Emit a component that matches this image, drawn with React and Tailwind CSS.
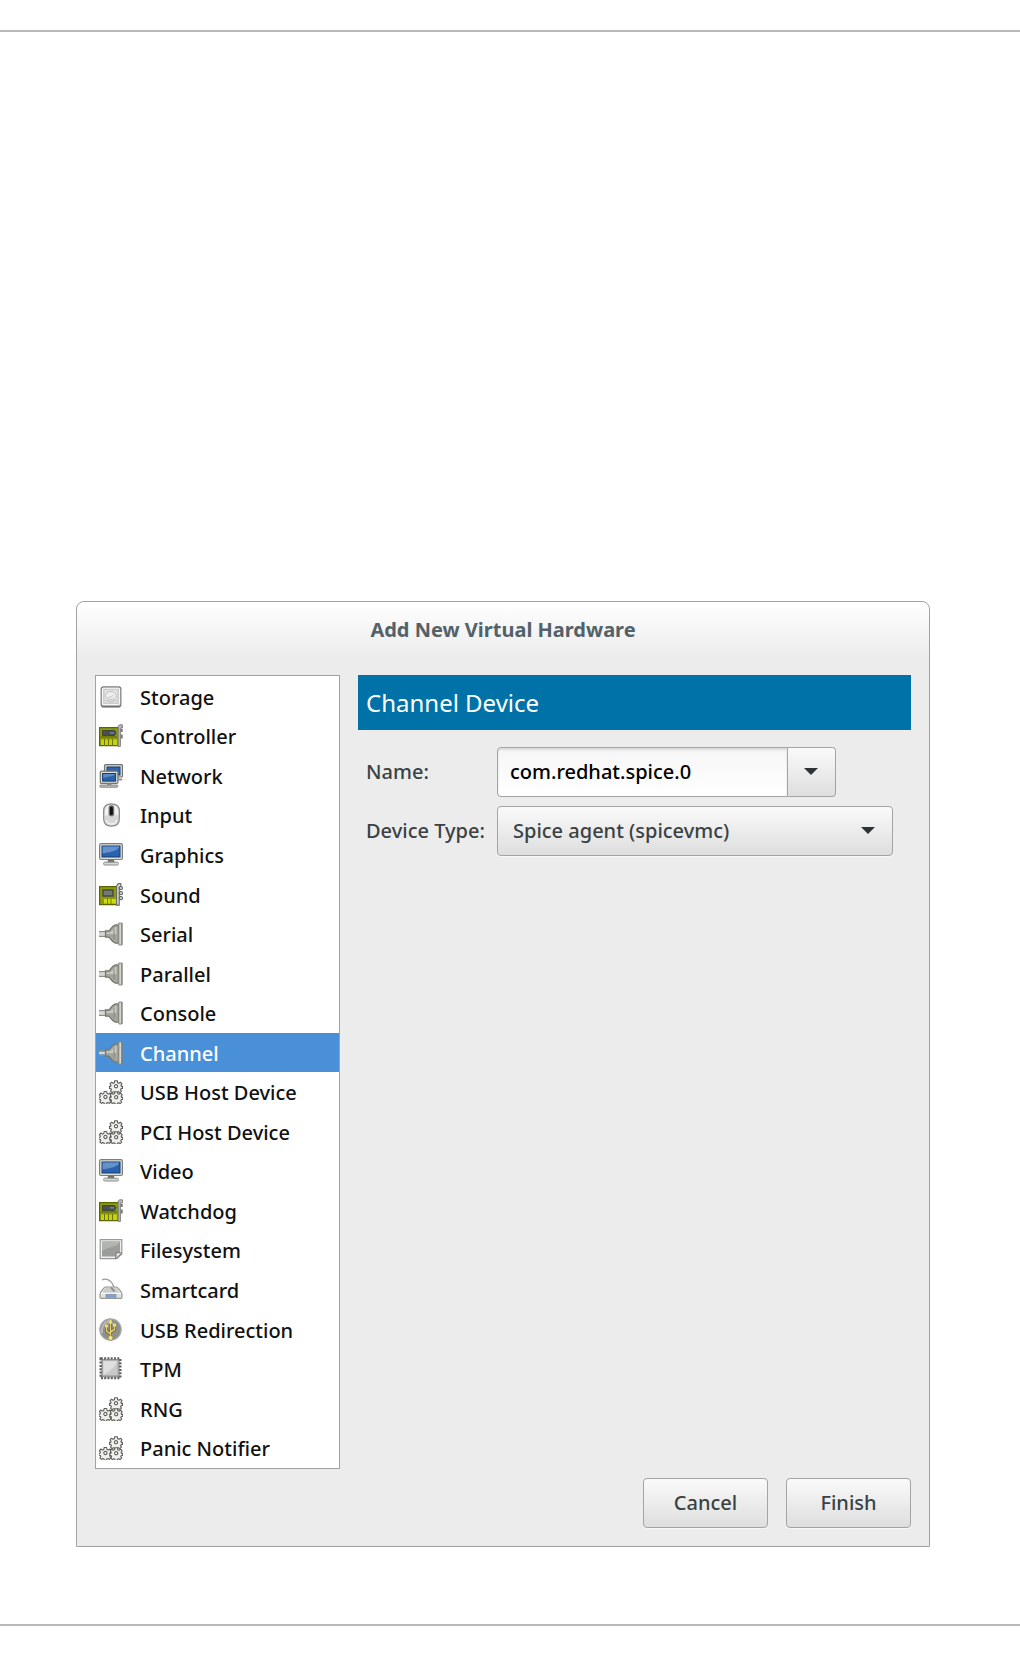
import React, { useState } from "react";

function Icon({ children }) {
  return (
    <svg viewBox="0 0 24 24" className="size-6 shrink-0" fill="none" aria-hidden="true">
      {children}
    </svg>
  );
}

function StorageIcon() {
  return (
    <Icon>
      <rect x="2.2" y="2" width="19.6" height="19.8" rx="2" fill="#d6d6d4" stroke="#7d7f7b" strokeWidth="1.3" />
      <path d="M3 21.4h18" stroke="#6e706c" strokeWidth="1.6" />
      <rect x="3.4" y="3.2" width="17.2" height="16.4" rx="1" stroke="#fafafa" />
      <rect x="5" y="4.6" width="14" height="13.5" rx="1" fill="#e4e4e3" stroke="#c3c3c1" strokeWidth=".8" />
      <ellipse cx="12" cy="10.500" rx="5.500" ry="4" fill="#efefee" stroke="#c0c0be" />
      <path d="M6 14.500c2 2.500 9 2.500 12 0" stroke="#bcbcba" />
      <path d="M9 12.500c2-.5 5-1 6-3" stroke="#c4c4c2" />
    </Icon>
  );
}

function CardIcon() {
  return (
    <Icon>
      <path d="M.6 3.600h18.800v18H.6z" fill="#8e9a0c" stroke="#5b6508" strokeWidth="1.200" />
      <path d="M2 15.500h16V21H2z" fill="#c5d408" />
      <path d="M5.500 15v7M9.500 15v7M13.500 15v7" stroke="#6b760a" strokeWidth="1" />
      <path d="M3.500 6.500h12l1.500 2-1.500 3h-12z" fill="#4b504c" stroke="#363b38" strokeWidth=".8" />
      <path d="M11 8h4v1.600h-4z" fill="#5a87b2" />
      <path d="M1.800 13h16" stroke="#59630b" />
      <path d="M23.400.800h-3l-1.200 1.400v20.200h2.200V4h2z" fill="#b9bab7" stroke="#838581" strokeWidth="1" />
      <path d="M22.800 5v3M22.800 10.500v4" stroke="#777975" strokeWidth="1.800" />
    </Icon>
  );
}

function NetworkIcon() {
  return (
    <Icon>
      <rect x="5.500" y=".6" width="18" height="12.400" rx="1.200" fill="#d9dad5" stroke="#72746f" strokeWidth="1.200" />
      <rect x="8" y="3" width="13" height="8" fill="#3066ae" stroke="#183e73" />
      <path d="M18 15.500h5.300" stroke="#8a8c88" strokeWidth="1.800" />
      <rect x="1.300" y="7.200" width="17.600" height="12.200" rx="1.200" fill="#dedfda" stroke="#72746f" strokeWidth="1.200" />
      <rect x="3.600" y="9.500" width="13" height="7.600" fill="#2c61ab" stroke="#163b70" />
      <path d="M4.200 14V10h12C14 13 8 12.500 4.200 14z" fill="#5b8cc9" />
      <path d="M8 19.500h4.500v1.500H8z" fill="#8d8f8b" />
      <rect x=".8" y="21" width="18" height="2.300" rx=".8" fill="#b9bab6" stroke="#7d7f7b" strokeWidth=".8" />
    </Icon>
  );
}

function MouseIcon() {
  return (
    <Icon>
      <path d="M4.600 8C4.600 3.200 7.500.800 12.300.800S20.400 3.200 20.400 8v7c0 5-3 8.200-8 8.200s-7.800-3.200-7.800-8.200z" fill="#d6d7d4" stroke="#8c8e8a" strokeWidth="1.200" />
      <path d="M6 8c0-3 2-5.500 4-5.800V11L6 13z" fill="#f3f3f2" />
      <path d="M15 2.500c3 .7 4 3 4 6v4l-4-1.500z" fill="#f0f0ef" />
      <path d="M7 17c1 3 3 4 5.500 4s4.500-1.500 5.500-4" stroke="#f2f2f1" strokeWidth="1.400" />
      <rect x="9.600" y="2.200" width="5.600" height="11" rx="2.800" fill="#6d6f6c" />
      <rect x="10.900" y="3.500" width="3" height="8.500" rx="1.500" fill="#111312" />
    </Icon>
  );
}

function MonitorIcon() {
  return (
    <Icon>
      <rect x=".6" y=".7" width="22.800" height="15.800" rx="1.500" fill="#dddeda" stroke="#7c7e79" strokeWidth="1.200" />
      <rect x="3" y="3" width="18" height="11" fill="#2b62ae" stroke="#173d74" />
      <path d="M3.600 10.500v-7h16.800c-2 5-10 5.500-16.800 7z" fill="#6493cc" />
      <path d="M9 16.800h6l.6 2.700H8.400z" fill="#6f716d" />
      <rect x="4.600" y="19.200" width="14.800" height="2.800" rx="1.200" fill="#d8d9d6" stroke="#8b8d89" strokeWidth="1" />
    </Icon>
  );
}

function SoundIcon() {
  return (
    <Icon>
      <path d="M.6 3.600h19v18H.6z" fill="#8e9a0c" stroke="#5b6508" strokeWidth="1.200" />
      <path d="M5 16h12v4.500H5z" fill="#cedb0a" />
      <path d="M8.500 15.500v5.500M12 15.500v5.500" stroke="#77820b" />
      <path d="M4 7h10v6H4z" fill="#737974" stroke="#444a43" strokeWidth="1.400" />
      <path d="M21.800.700h-2.500L17.600 3v19.200h2.600V4h1.600z" fill="#dfe0dd" stroke="#6c6e6a" strokeWidth="1.200" />
      <rect x="20.400" y="3.600" width="3" height="3" rx=".7" fill="#d0d1ce" stroke="#50524e" />
      <rect x="20.400" y="8.600" width="3" height="3" rx=".7" fill="#d0d1ce" stroke="#50524e" />
      <rect x="20.400" y="13.600" width="3" height="3" rx=".7" fill="#d0d1ce" stroke="#50524e" />
    </Icon>
  );
}

function PlugIcon() {
  return (
    <Icon>
      <path d="M0 9.800h9M0 14.200h9" stroke="#8d8f87" strokeWidth="1.500" />
      <path d="M0 12h9" stroke="#d8d9d4" strokeWidth="2.400" />
      <path d="M6.500 8.800h3c2 0 2.500-4.800 7-6h3v18.400h-3c-4.500-1.200-5-6-7-6h-3z" fill="#a4a69e" stroke="#74766e" strokeWidth="1.200" />
      <path d="M7.500 10.500h3c2.500 0 3-4.500 7-5.500v7h-10z" fill="#c9cac4" />
      <path d="M15 6.500v11" stroke="#85877f" />
      <path d="M19.800 1h3v22h-3z" fill="#d5d6d0" stroke="#8b8d85" strokeWidth="1" />
      <path d="M23 1v22" stroke="#777971" strokeWidth="1" />
    </Icon>
  );
}

const GEAR =
  "M-1.300-5.500h2.600l.3 2 1.300.6 1.600-1.100 1.500 1.600-1 1.500.3 1.100h1.200v2l-1.500.3-.4 1 .9 1.500-1.600 1.400-1.300-.9-1.300.5v1.200h-2.600v-1.200l-1.300-.5-1.300.9-1.600-1.400.9-1.500-.4-1-1.500-.3v-2h1.200l.3-1.100-1-1.500 1.500-1.600 1.600 1.100 1.300-.6z";

function Gear({ x, y }) {
  return (
    <g transform={`translate(${x} ${y})`}>
      <path d={GEAR} fill="#f0f0ee" stroke="#5c5e59" strokeWidth="1.100" strokeLinejoin="round" />
      <circle r="1.600" fill="#fff" stroke="#5c5e59" strokeWidth="1.100" />
    </g>
  );
}

function GearsIcon() {
  return (
    <Icon>
      <Gear x={17} y={6.200} />
      <Gear x={6.400} y={17} />
      <Gear x={17.200} y={17.200} />
    </Icon>
  );
}

function FilesystemIcon() {
  return (
    <Icon>
      <path d="M1.200 1.600h21.600V16l-5 4.600H1.200z" fill="#eeeeec" stroke="#999b97" strokeWidth="1.200" />
      <path d="M3 3.500h18v11l-4 4H3z" fill="#9b9d99" />
      <path d="M3 13V3.500h18C18 10 10 8 3 13z" fill="#b2b4b0" />
      <path d="M16.500 20.800l.8-6.300 5.700.5z" fill="#e7e7e5" stroke="#777975" strokeWidth="1" />
    </Icon>
  );
}

function SmartcardIcon() {
  return (
    <Icon>
      <path d="M3 2C7 0 11 2 13 5l2 4" stroke="#9a9c99" strokeWidth="1.300" />
      <path d="M6.500 9h11c1 0 5.500 5.500 5.500 7v3c0 .8-.5 1.300-1.300 1.300H2.300c-.8 0-1.300-.5-1.300-1.300v-3c0-1.500 4.500-7 5.500-7z" fill="#e0e1df" stroke="#969894" strokeWidth="1.200" />
      <path d="M7 10h10l4 5H3z" fill="#cbccc9" />
      <path d="M12 9.500l3.500 4" stroke="#858784" strokeWidth="1.600" />
      <path d="M2 15.300h20" stroke="#fafafa" strokeWidth="1.200" />
      <rect x="7" y="16.500" width="10" height="2.700" fill="#7fa5d5" stroke="#6d7f99" strokeWidth=".6" />
    </Icon>
  );
}

function UsbIcon() {
  return (
    <Icon>
      <circle cx="11.500" cy="11.500" r="10.700" fill="#8e908c" stroke="#a9aaa8" strokeWidth="1.200" />
      <path d="M3 15C2 7 7 2.500 13 2.500" stroke="#b9bab8" strokeWidth="2" />
      <path d="M11.500 20V4M11.500 16L7.500 13V8M11.500 14l4-2.500V7" stroke="#5e5a3c" strokeWidth="3" />
      <path d="M11.500 20V4M11.500 16L7.500 13V8M11.500 14l4-2.500V7" stroke="#e6d264" strokeWidth="1.500" />
      <path d="M11.500 1.500L9 5.500h5z" fill="#f1df72" />
      <circle cx="7.500" cy="8" r="1.700" fill="#f0dc66" />
      <path d="M14 5.600h3v3h-3z" fill="#f0dc66" />
      <circle cx="11.500" cy="20" r="2.400" fill="#f3e58c" stroke="#847a35" strokeWidth=".6" />
    </Icon>
  );
}

function ChipIcon() {
  return (
    <Icon>
      <rect x="1.800" y="1.600" width="19.400" height="19.400" stroke="#5f615e" strokeWidth="2.600" strokeDasharray="2 1.300" />
      <rect x="3" y="2.800" width="17" height="17" fill="#c9cac8" stroke="#777976" strokeWidth="1" />
      <path d="M4.500 18V4.300h14C16 10 11 14 4.500 18z" fill="#dfe0de" />
      <path d="M4 18.800h15V4" stroke="#a0a29f" />
    </Icon>
  );
}

const HARDWARE = [
  ["Storage", StorageIcon],
  ["Controller", CardIcon],
  ["Network", NetworkIcon],
  ["Input", MouseIcon],
  ["Graphics", MonitorIcon],
  ["Sound", SoundIcon],
  ["Serial", PlugIcon],
  ["Parallel", PlugIcon],
  ["Console", PlugIcon],
  ["Channel", PlugIcon],
  ["USB Host Device", GearsIcon],
  ["PCI Host Device", GearsIcon],
  ["Video", MonitorIcon],
  ["Watchdog", CardIcon],
  ["Filesystem", FilesystemIcon],
  ["Smartcard", SmartcardIcon],
  ["USB Redirection", UsbIcon],
  ["TPM", ChipIcon],
  ["RNG", GearsIcon],
  ["Panic Notifier", GearsIcon],
];

function Arrow() {
  return (
    <svg viewBox="0 0 14 7" className="h-[7px] w-3.5" aria-hidden="true">
      <path d="M0 0h14L7 7z" fill="#2e3436" />
    </svg>
  );
}

function DialogButton({ children }) {
  return (
    <button
      type="button"
      className="h-[50px] w-[125px] rounded border border-[#a4a4a4] bg-linear-to-b from-[#fafafa] to-[#dedede] font-medium text-[#3a4244] shadow-[0_1px_0_#f6f6f6]"
    >
      {children}
    </button>
  );
}

export default function App() {
  const [selected, setSelected] = useState("Channel");

  return (
    <main className="min-h-screen bg-white pt-[30px] pb-[30px] font-['Noto_Sans','Open_Sans',sans-serif] text-[20px] leading-7">
      <hr className="border-t-2 border-[#b9b9b9]" />
      <section
        role="dialog"
        aria-labelledby="dialog-title"
        className="mt-[569px] mr-[90px] mb-[77px] ml-[76px] rounded-t-lg border border-[#a1a1a1] bg-[#ececec]"
      >
        <header className="rounded-t-lg bg-linear-to-b from-white to-[#ececec] pt-[14px] pb-[13px]">
          <h1 id="dialog-title" className="text-center text-[20px] leading-7 font-bold text-[#536268]">
            Add New Virtual Hardware
          </h1>
        </header>

        <div className="flex gap-[18px] px-[18px] pt-[18px]">
          <ul className="grid min-h-[794px] w-[245px] shrink-0 auto-rows-fr border border-[#a1a1a1] bg-white pt-px">
            {HARDWARE.map(([label, Glyph]) => (
              <li key={label} className="flex">
                <button
                  type="button"
                  aria-pressed={selected === label}
                  onClick={() => setSelected(label)}
                  className={
                    selected === label
                      ? "flex w-full items-center gap-[17px] bg-[#4a90d9] pl-[3px] text-left font-medium text-white"
                      : "flex w-full items-center gap-[17px] pl-[3px] text-left font-medium text-[#111111]"
                  }
                >
                  <Glyph />
                  <span className="pt-0.5">{label}</span>
                </button>
              </li>
            ))}
          </ul>

          <div className="min-w-0 flex-1">
            <h2 className="bg-[#0072a8] px-2 pt-[13px] pb-3 text-[24px] leading-[30px] text-white">Channel Device</h2>
            <form className="mt-[17px] grid grid-cols-[131px_1fr] items-center gap-y-[9px] pr-[18px] pl-2 text-[#3a4244]">
              <label htmlFor="name" className="font-medium">Name:</label>
              <div className="flex h-[50px] max-w-[339px]">
                <input
                  id="name"
                  type="text"
                  defaultValue="com.redhat.spice.0"
                  className="min-w-0 flex-1 rounded-l border border-[#a4a4a4] bg-linear-to-b from-[#f6f6f6] to-white pl-3 font-medium text-black shadow-[inset_0_2px_2px_#dadada]"
                />
                <button
                  type="button"
                  aria-label="Show names"
                  className="flex w-12 items-center justify-center rounded-r border border-l-0 border-[#a4a4a4] bg-linear-to-b from-[#fafafa] to-[#dedede] pr-0.5 pb-0.5"
                >
                  <Arrow />
                </button>
              </div>
              <label htmlFor="device-type" className="font-medium">Device Type:</label>
              <div className="grid grid-cols-1 items-center">
                <select
                  id="device-type"
                  className="col-start-1 row-start-1 h-[50px] w-full appearance-none rounded border border-[#a4a4a4] bg-linear-to-b from-[#fafafa] to-[#dedede] pr-10 pl-[15px] font-medium text-[#3a4244] shadow-[0_1px_0_#f6f6f6]"
                >
                  <option>Spice agent (spicevmc)</option>
                </select>
                <span className="pointer-events-none col-start-1 row-start-1 mr-[18px] justify-self-end pb-0.5">
                  <Arrow />
                </span>
              </div>
            </form>
          </div>
        </div>

        <footer className="flex justify-end gap-[18px] px-[18px] pt-[9px] pb-[18px]">
          <DialogButton>Cancel</DialogButton>
          <DialogButton>Finish</DialogButton>
        </footer>
      </section>
      <hr className="border-t-2 border-[#b9b9b9]" />
    </main>
  );
}
